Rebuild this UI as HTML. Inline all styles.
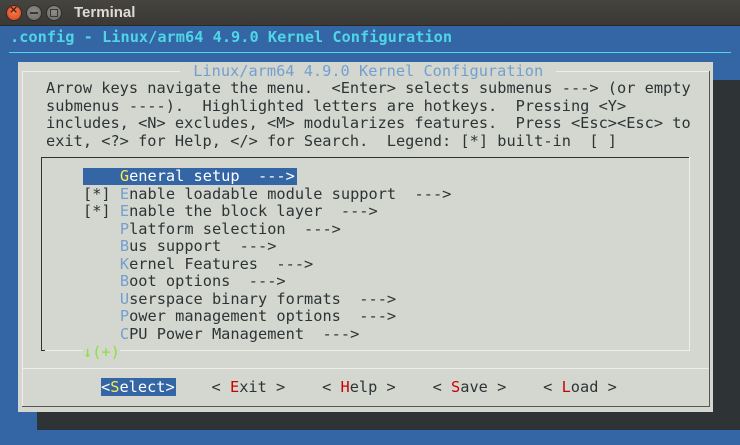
<!DOCTYPE html>
<html><head><meta charset="utf-8"><style>
*{margin:0;padding:0;box-sizing:border-box}
body{width:740px;height:445px;overflow:hidden;background:#3465a4;position:relative;font-family:"DejaVu Sans Mono","Liberation Mono",monospace;font-size:15.3px;color:#2e3436}
.tb{position:absolute;left:0;top:0;width:740px;height:26px;background:linear-gradient(#45443f,#3a3935);border-bottom:1px solid #2a2a27}
.tb .t{position:absolute;left:74px;top:4px;font-family:"Liberation Sans",sans-serif;font-weight:bold;font-size:15px;color:#dfdbd2}
.btn{position:absolute;top:5px;width:16px;height:16px;border-radius:50%}
pre{font-family:inherit;font-size:inherit;position:absolute;white-space:pre;line-height:17.5px}
.c{color:#4fd6e6;font-weight:bold}
.hk{color:#729fcf}
.r{color:#cc0000}
</style></head><body>
<div class="tb">
<div class="btn" style="left:6px;background:radial-gradient(circle at 50% 40%,#f27d53,#d6441c);border:1px solid #3a2a22"></div>
<div class="btn" style="left:26px;background:radial-gradient(circle at 50% 40%,#8e8d88,#6a6964);border:1px solid #2f2e2b"></div>
<div class="btn" style="left:46px;background:radial-gradient(circle at 50% 40%,#8e8d88,#6a6964);border:1px solid #2f2e2b"></div>
<span style="position:absolute;left:9px;top:3px;font:bold 11px 'DejaVu Sans';color:#4a1a0a">×</span>
<span style="position:absolute;left:30px;top:12px;width:8px;height:2px;background:#3a3935"></span>
<span style="position:absolute;left:50px;top:9px;width:8px;height:8px;border:1.5px solid #3a3935"></span>
<div class="t">Terminal</div>
</div>
<pre class="c" style="left:10px;top:29px;">.config - Linux/arm64 4.9.0 Kernel Configuration</pre>
<div style="position:absolute;left:9px;top:52px;width:722px;height:1px;background:#4fd6e6"></div>
<!-- shadow -->
<div style="position:absolute;left:713px;top:80px;width:27px;height:350px;background:#2e3436"></div>
<div style="position:absolute;left:37px;top:412px;width:703px;height:18px;background:#2e3436"></div>
<!-- dialog -->
<div style="position:absolute;left:18px;top:62px;width:695px;height:350px;background:#d3d7cf"></div>
<div style="position:absolute;left:22px;top:71px;width:687px;height:1px;background:#eeeeec"></div>
<div style="position:absolute;left:22px;top:71px;width:1px;height:336px;background:#eeeeec"></div>
<div style="position:absolute;left:709px;top:71px;width:1px;height:336px;background:#555753"></div>
<div style="position:absolute;left:22px;top:406px;width:688px;height:1px;background:#555753"></div>
<div style="position:absolute;left:22px;top:368px;width:687px;height:1px;background:#eeeeec"></div>
<pre style="left:180px;top:63px;background:#d3d7cf;color:#729fcf;padding:0 4px"> Linux/arm64 4.9.0 Kernel Configuration </pre>
<pre style="left:46px;top:80px;">Arrow keys navigate the menu.  &lt;Enter&gt; selects submenus ---&gt; (or empty
submenus ----).  Highlighted letters are hotkeys.  Pressing &lt;Y&gt;
includes, &lt;N&gt; excludes, &lt;M&gt; modularizes features.  Press &lt;Esc&gt;&lt;Esc&gt; to
exit, &lt;?&gt; for Help, &lt;/&gt; for Search.  Legend: [*] built-in  [ ]</pre>
<!-- inner box -->
<div style="position:absolute;left:41px;top:157px;width:649px;height:1px;background:#2e3436"></div>
<div style="position:absolute;left:41px;top:157px;width:1px;height:194px;background:#2e3436"></div>
<div style="position:absolute;left:689px;top:157px;width:1px;height:194px;background:#eeeeec"></div>
<div style="position:absolute;left:41px;top:350px;width:649px;height:1px;background:#eeeeec"></div>
<div style="position:absolute;left:41px;top:350px;width:4px;height:1px;background:#2e3436"></div>
<div style="position:absolute;left:83px;top:168px;width:214px;height:17px;background:#3465a4"></div>
<pre style="left:83px;top:168px;"><span style="color:#fff">    <span style="color:#fce94f">G</span>eneral setup  ---&gt;</span>
[*] <span class="hk">E</span>nable loadable module support  ---&gt;
[*] <span class="hk">E</span>nable the block layer  ---&gt;
    <span class="hk">P</span>latform selection  ---&gt;
    <span class="hk">B</span>us support  ---&gt;
    <span class="hk">K</span>ernel Features  ---&gt;
    <span class="hk">B</span>oot options  ---&gt;
    <span class="hk">U</span>serspace binary formats  ---&gt;
    <span class="hk">P</span>ower management options  ---&gt;
    <span class="hk">C</span>PU Power Management  ---&gt;</pre>
<pre style="left:83px;top:344px;color:#8ae234;background:#d3d7cf">↓(+)</pre>
<div style="position:absolute;left:101px;top:378px;width:75px;height:18px;background:#3465a4"></div>
<pre style="left:101px;top:379px;"><span style="color:#fff">&lt;<span style="color:#fce94f">S</span>elect&gt;</span>    &lt; <span class="r">E</span>xit &gt;    &lt; <span class="r">H</span>elp &gt;    &lt; <span class="r">S</span>ave &gt;    &lt; <span class="r">L</span>oad &gt;</pre>
</body></html>
